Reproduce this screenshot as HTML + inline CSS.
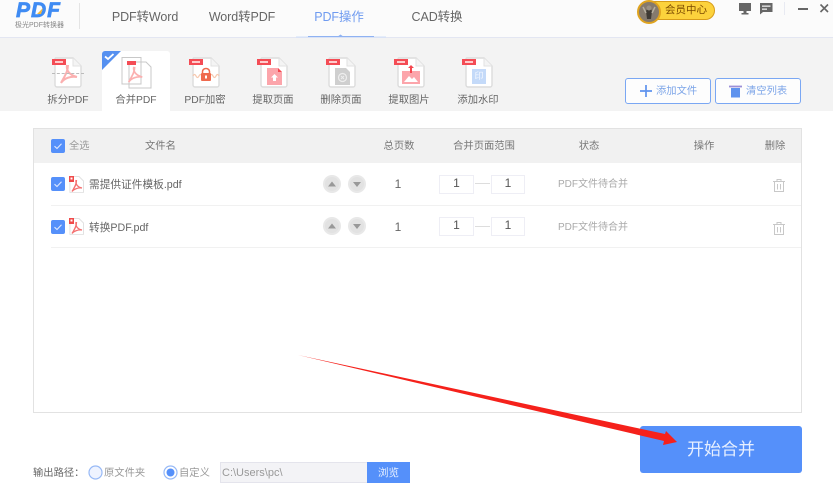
<!DOCTYPE html>
<html><head><meta charset="utf-8">
<style>
html,body{margin:0;padding:0;background:#fff}
#p{position:relative;width:833px;height:501px;overflow:hidden;background:#fff;font-family:"Liberation Sans","Noto Sans CJK SC",sans-serif;color:#666;filter:blur(.35px)}
#p div,#p span.a{position:absolute;white-space:nowrap}
.t{font-size:10.3px;line-height:18px;text-align:center}
.nav{font-size:12.5px;line-height:20px;top:7px;color:#666;text-align:center;letter-spacing:-.1px}
.chk{width:14px;height:14px;background:#5590fa;border-radius:2px}
.inp{width:33px;height:17px;border:1px solid #eeeef5;background:#fff;font-size:12px;line-height:15px;text-align:center;color:#555}
svg{position:absolute;overflow:visible}
</style></head><body><div id="p">
<svg width="0" height="0" style="position:absolute"><defs>
<symbol id="doc" viewBox="0 0 28 31"><path d="M2 1H19L27 9V28a2 2 0 0 1-2 2H3a2 2 0 0 1-2-2V2a1 1 0 0 1 1-1Z" fill="#fff" stroke="#dcdcdc" stroke-width="1.400"/><path d="M19 1V9H27" fill="#f4f4f4" stroke="#e2e2e2" stroke-width="1"/></symbol>
<symbol id="chk" viewBox="0 0 14 14"><path d="M3.500 7.200 6 9.500 10.500 4.800" fill="none" stroke="#dfe9ff" stroke-width="1.100"/></symbol>
<symbol id="acro" viewBox="0 0 20 20"><path d="M8 1C7 6 10 11 18 13 12 12 5 14 2 19 5 13 9 8 9 1" fill="none" stroke="#fbb0b0" stroke-width="2"/></symbol>
<symbol id="file" viewBox="0 0 15 17"><path d="M1.500.5H10L14.500 5V16a.6.6 0 0 1-.6.6H1.500a.6.6 0 0 1-.6-.6V1Z" fill="#fff" stroke="#e2e2e2"/><rect x="0" y="0" width="5" height="6" fill="#f04a4a"/><rect x="1.500" y="1.500" width="2" height="2" fill="#fff"/><path d="M7 4C6.500 8 8 11 13 12 9 11.500 5 13 3 15.500 5 12 7.500 9 7.500 4" fill="none" stroke="#f47070" stroke-width="1.300"/></symbol>
<symbol id="tag" viewBox="0 0 14 6"><rect width="14" height="6" fill="#f44c55"/><rect x="3" y="2" width="8" height="2" fill="#fcc"/></symbol>
<symbol id="bin" viewBox="0 0 12 13"><path d="M0 2.500H12M4 2.500V.5H8V2.500M1.500 2.500V12.500H10.500V2.500M4.500 5V10.500M7.500 5V10.500" fill="none" stroke="#c8c8c8"/></symbol>
</defs></svg>

<!-- header -->
<div style="left:0;top:0;width:833px;height:37px;background:#fbfbfb"></div>
<div style="left:0;top:37px;width:833px;height:1px;background:#e3e6f2"></div>
<div style="left:0;top:38px;width:833px;height:73px;background:#f3f3f3"></div>
<div style="left:79px;top:3px;width:1px;height:26px;background:#e4e4e4"></div>
<div style="left:16px;top:-1px;font:italic bold 21px/24px 'Liberation Sans',sans-serif;color:#3f8bf3;letter-spacing:1px;-webkit-text-stroke:.7px #3f8bf3">PDF</div>
<svg style="left:36px;top:7px" width="8" height="8"><path d="M1 7 7 1 5 7Z" fill="#f4b73a"/></svg>
<div style="left:15px;top:20px;font-size:7px;line-height:12px;color:#888;width:46px;text-align:center">极光PDF转换器</div>
<div class="nav" style="left:105px;width:80px">PDF转Word</div>
<div class="nav" style="left:202px;width:80px">Word转PDF</div>
<div class="nav" style="left:309px;width:60px;color:#6f9bf0">PDF操作</div>
<div class="nav" style="left:405px;width:64px">CAD转换</div>
<svg style="left:296px;top:34px" width="90" height="4"><path d="M0 3H90" stroke="#cfdff9" stroke-width="1"/><path d="M12 2.500H78" stroke="#8fb2f2" stroke-width="1"/><path d="M41 3 44.500 .5 48 3Z" fill="#8fb2f2"/></svg>

<!-- vip -->
<div style="left:640px;top:1px;width:75px;height:19px;background:#fcd23c;border:1px solid #d79c1a;border-radius:10px;box-sizing:border-box"></div>
<div style="left:637px;top:0;width:24px;height:24px;border-radius:50%;background:#857a6e;border:2px solid #e0a41f;box-sizing:border-box"></div>
<svg style="left:642px;top:3px" width="14" height="18"><path d="M7 3 10 8 9 16H5L4 8Z" fill="#3f3a34"/><circle cx="7" cy="5" r="2.500" fill="#9a9185"/><path d="M1 4 4 10M13 4 10 10" stroke="#b5ae9f" stroke-width="1.500"/></svg>
<div style="left:665px;top:3px;font-size:10.500px;line-height:15px;color:#7b4a00">会员中心</div>
<svg style="left:739px;top:3px" width="14" height="12"><path d="M0 0H12V8H7.500V10H9.500V11.500H2.500V10H4.500V8H0Z" fill="#666"/></svg>
<svg style="left:760px;top:3px" width="13" height="12"><path d="M0 0H12.500V9H3L0 11.500Z" fill="#666"/><rect x="2" y="2.500" width="8.500" height="1.300" fill="#eee"/><rect x="2" y="5.500" width="5" height="1.300" fill="#eee"/></svg>
<div style="left:784px;top:2px;width:1px;height:13px;background:#e8eaf2"></div>
<div style="left:798px;top:8px;width:10px;height:2px;background:#666"></div>
<svg style="left:820px;top:4px" width="9" height="9"><path d="M.5 .5 8 8M8 .5 .5 8" stroke="#666" stroke-width="1.600"/></svg>

<!-- tools -->
<div style="left:102px;top:51px;width:68px;height:60px;background:#fff;border-radius:3px 3px 0 0"></div>
<svg style="left:102px;top:51px" width="19" height="19"><path d="M3 0H19L0 19V3A3 3 0 0 1 3 0Z" fill="#5590f0"/><path d="M3 5.500 6 8 11.500 3" fill="none" stroke="#fff" stroke-width="1.800"/></svg>

<svg style="left:54px;top:57px" width="28" height="31"><use href="#doc"/></svg>
<svg style="left:59px;top:64px" width="20" height="20"><use href="#acro"/></svg>
<div style="left:52px;top:73px;width:32px;border-top:1px dashed #bbb"></div>
<svg style="left:52px;top:59px" width="14" height="6"><use href="#tag"/></svg>

<svg style="left:121px;top:57px" width="31" height="33" fill="none" stroke="#c8c8c8" stroke-width="1"><path d="M1 .5H20V27H1Z"/><path d="M8 5H25L30 10V31H8Z"/></svg>
<svg style="left:127px;top:61px" width="9" height="4"><rect width="9" height="4" fill="#f44c55"/></svg>
<svg style="left:127px;top:66px" width="17" height="17"><use href="#acro"/></svg>

<svg style="left:192px;top:57px" width="28" height="31"><use href="#doc"/></svg>
<svg style="left:189px;top:59px" width="14" height="6"><use href="#tag"/></svg>
<svg style="left:193px;top:68px" width="26" height="14"><path d="M0 8q1.500-3 3 0t3 0 3 0M17 8q1.500-3 3 0t3 0 3 0" fill="none" stroke="#f6c8ae" stroke-width="1.200"/><path d="M9.500 5V3.500a3.500 3 0 0 1 7 0V5" fill="none" stroke="#ef6a4e" stroke-width="1.500"/><rect x="8" y="5" width="10" height="8" rx="1" fill="#ef6a4e"/><rect x="12" y="7.500" width="2" height="3" fill="#fff"/></svg>

<svg style="left:260px;top:57px" width="28" height="31"><use href="#doc"/></svg>
<svg style="left:257px;top:59px" width="14" height="6"><use href="#tag"/></svg>
<svg style="left:267px;top:68px" width="15" height="17"><path d="M0 0H11L15 4V17H0Z" fill="#fca5ab"/><path d="M11 0 15 4H11Z" fill="#f4474f"/><path d="M7.500 6 11 9.500H9V13H6V9.500H4Z" fill="#fff"/></svg>

<svg style="left:328px;top:57px" width="28" height="31"><use href="#doc"/></svg>
<svg style="left:326px;top:59px" width="14" height="6"><use href="#tag"/></svg>
<svg style="left:335px;top:68px" width="15" height="17"><path d="M0 0H11L15 4V17H0Z" fill="#cfcfcf"/><circle cx="7.500" cy="9.500" r="4" fill="none" stroke="#eee" stroke-width="1.200"/><path d="M6 8 9 11M9 8 6 11" stroke="#eee"/></svg>

<svg style="left:397px;top:57px" width="28" height="31"><use href="#doc"/></svg>
<svg style="left:394px;top:59px" width="14" height="6"><use href="#tag"/></svg>
<svg style="left:402px;top:65px" width="18" height="19"><path d="M0 6H18V19H0Z" fill="#fca5ab"/><path d="M2 17 7 11 10 14 12 12 16 17Z" fill="#fff"/><path d="M9 0 12 3H10V8H8V3H6Z" fill="#f4474f"/></svg>

<svg style="left:465px;top:57px" width="28" height="31"><use href="#doc"/></svg>
<svg style="left:462px;top:59px" width="14" height="6"><use href="#tag"/></svg>
<svg style="left:472px;top:69px" width="14" height="15"><rect width="14" height="15" fill="#c4daf9"/></svg>
<div style="left:472px;top:69px;width:14px;font-size:9px;line-height:14px;color:#f4f8ff;text-align:center">印</div>

<div class="t" style="left:38px;top:92px;width:60px">拆分PDF</div>
<div class="t" style="left:106px;top:92px;width:60px">合并PDF</div>
<div class="t" style="left:175px;top:92px;width:60px">PDF加密</div>
<div class="t" style="left:243px;top:92px;width:60px">提取页面</div>
<div class="t" style="left:311px;top:92px;width:60px">删除页面</div>
<div class="t" style="left:379px;top:92px;width:60px">提取图片</div>
<div class="t" style="left:448px;top:92px;width:60px">添加水印</div>

<div style="left:625px;top:78px;width:86px;height:26px;box-sizing:border-box;border:1px solid #7aa7f3;border-radius:3px;background:#fdfdfd"></div>
<svg style="left:640px;top:85px" width="12" height="12"><path d="M6 0V12M0 6H12" stroke="#5f93ee" stroke-width="1.700"/></svg>
<div class="t" style="left:656px;top:83px;color:#7da5e8">添加文件</div>
<div style="left:715px;top:78px;width:86px;height:26px;box-sizing:border-box;border:1px solid #7aa7f3;border-radius:3px;background:#fdfdfd"></div>
<svg style="left:729px;top:85px" width="13" height="13"><rect x="2" y="3" width="9" height="9.500" fill="#5f93ee"/><path d="M0 1.500H13" stroke="#9b8fd8" stroke-width="1.800"/></svg>
<div class="t" style="left:746px;top:83px;color:#7da5e8">清空列表</div>

<!-- table -->
<div style="left:33px;top:128px;width:769px;height:285px;box-sizing:border-box;border:1px solid #e2e2e2;background:#fff"></div>
<div style="left:34px;top:129px;width:767px;height:33.500px;background:#f1f1f1"></div>
<div class="chk" style="left:51px;top:139px"></div><svg style="left:51px;top:139px" width="14" height="14"><use href="#chk"/></svg>
<div class="t" style="left:69px;top:138px;color:#999">全选</div>
<div class="t" style="left:145px;top:138px;color:#777">文件名</div>
<div class="t" style="left:369px;top:138px;width:60px;color:#777">总页数</div>
<div class="t" style="left:444px;top:138px;width:80px;color:#777">合并页面范围</div>
<div class="t" style="left:569px;top:138px;width:40px;color:#777">状态</div>
<div class="t" style="left:684px;top:138px;width:40px;color:#777">操作</div>
<div class="t" style="left:755px;top:138px;width:40px;color:#777">删除</div>

<div style="left:51px;top:205px;width:750px;height:1px;background:#f1f1f1"></div>
<div style="left:51px;top:247px;width:750px;height:1px;background:#f1f1f1"></div>

<!-- row 1 -->
<div class="chk" style="left:51px;top:177px"></div><svg style="left:51px;top:177px" width="14" height="14"><use href="#chk"/></svg>
<svg style="left:69px;top:176px" width="15" height="17"><use href="#file"/></svg>
<div class="t" style="left:89px;top:176px;font-size:10.700px;color:#666">需提供证件模板.pdf</div>
<svg style="left:323px;top:175px" width="18" height="18"><circle cx="9" cy="9" r="9" fill="#e8e8e8"/><circle cx="9" cy="9" r="7" fill="#e2e2e2"/><path d="M5 11.500 9 6.500 13 11.500Z" fill="#999"/></svg>
<svg style="left:348px;top:175px" width="18" height="18"><circle cx="9" cy="9" r="9" fill="#e8e8e8"/><circle cx="9" cy="9" r="7" fill="#e2e2e2"/><path d="M5 7 9 12 13 7Z" fill="#999"/></svg>
<div class="t" style="left:388px;top:175px;width:20px;font-size:12px;color:#666">1</div>
<div class="inp" style="left:439px;top:174.500px">1</div>
<div style="left:475px;top:183px;width:15px;height:1px;background:#ddd"></div>
<div class="inp" style="left:491px;top:174.500px;width:32px">1</div>
<div class="t" style="left:558px;top:176px;font-size:10px;color:#aaa">PDF文件待合并</div>
<svg style="left:773px;top:179px" width="12" height="13"><use href="#bin"/></svg>

<!-- row 2 -->
<div class="chk" style="left:51px;top:220px"></div><svg style="left:51px;top:220px" width="14" height="14"><use href="#chk"/></svg>
<svg style="left:69px;top:218px" width="15" height="17"><use href="#file"/></svg>
<div class="t" style="left:89px;top:219px;font-size:10.700px;color:#666">转换PDF.pdf</div>
<svg style="left:323px;top:217px" width="18" height="18"><circle cx="9" cy="9" r="9" fill="#e8e8e8"/><circle cx="9" cy="9" r="7" fill="#e2e2e2"/><path d="M5 11.500 9 6.500 13 11.500Z" fill="#999"/></svg>
<svg style="left:348px;top:217px" width="18" height="18"><circle cx="9" cy="9" r="9" fill="#e8e8e8"/><circle cx="9" cy="9" r="7" fill="#e2e2e2"/><path d="M5 7 9 12 13 7Z" fill="#999"/></svg>
<div class="t" style="left:388px;top:218px;width:20px;font-size:12px;color:#666">1</div>
<div class="inp" style="left:439px;top:216.500px">1</div>
<div style="left:475px;top:226px;width:15px;height:1px;background:#ddd"></div>
<div class="inp" style="left:491px;top:216.500px;width:32px">1</div>
<div class="t" style="left:558px;top:219px;font-size:10px;color:#aaa">PDF文件待合并</div>
<svg style="left:773px;top:222px" width="12" height="13"><use href="#bin"/></svg>

<!-- footer -->
<div class="t" style="left:33px;top:465px;font-size:10.300px;color:#666">输出路径：</div>
<svg style="left:88px;top:465px" width="15" height="15"><circle cx="7.500" cy="7.500" r="6.500" fill="#eef3ff" stroke="#97b9f6" stroke-width="1.200"/></svg>
<div class="t" style="left:104px;top:465px;color:#999">原文件夹</div>
<svg style="left:163px;top:465px" width="15" height="15"><circle cx="7.500" cy="7.500" r="6.500" fill="#fff" stroke="#97b9f6" stroke-width="1.200"/><circle cx="7.500" cy="7.500" r="4" fill="#5590fa"/></svg>
<div class="t" style="left:179px;top:465px;color:#999">自定义</div>
<div style="left:220px;top:462px;width:148px;height:21px;box-sizing:border-box;background:#f3f3f6;border:1px solid #e4e4ec;font-size:11px;line-height:21px;color:#999;padding-left:1px">C:\Users\pc\</div>
<div style="left:367px;top:462px;width:43px;height:21px;background:#5590fa;color:#e8f0ff;font-size:10.500px;line-height:22px;text-align:center">浏览</div>
<div style="left:640px;top:426px;width:162px;height:47px;background:#5590fa;border-radius:3px;color:#e6efff;font-size:17px;line-height:47px;text-align:center">开始合并</div>

<!-- arrow -->
<svg style="left:0;top:0" width="833" height="501"><path d="M298 355 665 434 666 431 677 442 663 445 664 441Z" fill="#f5211b"/></svg>
</div></body></html>
